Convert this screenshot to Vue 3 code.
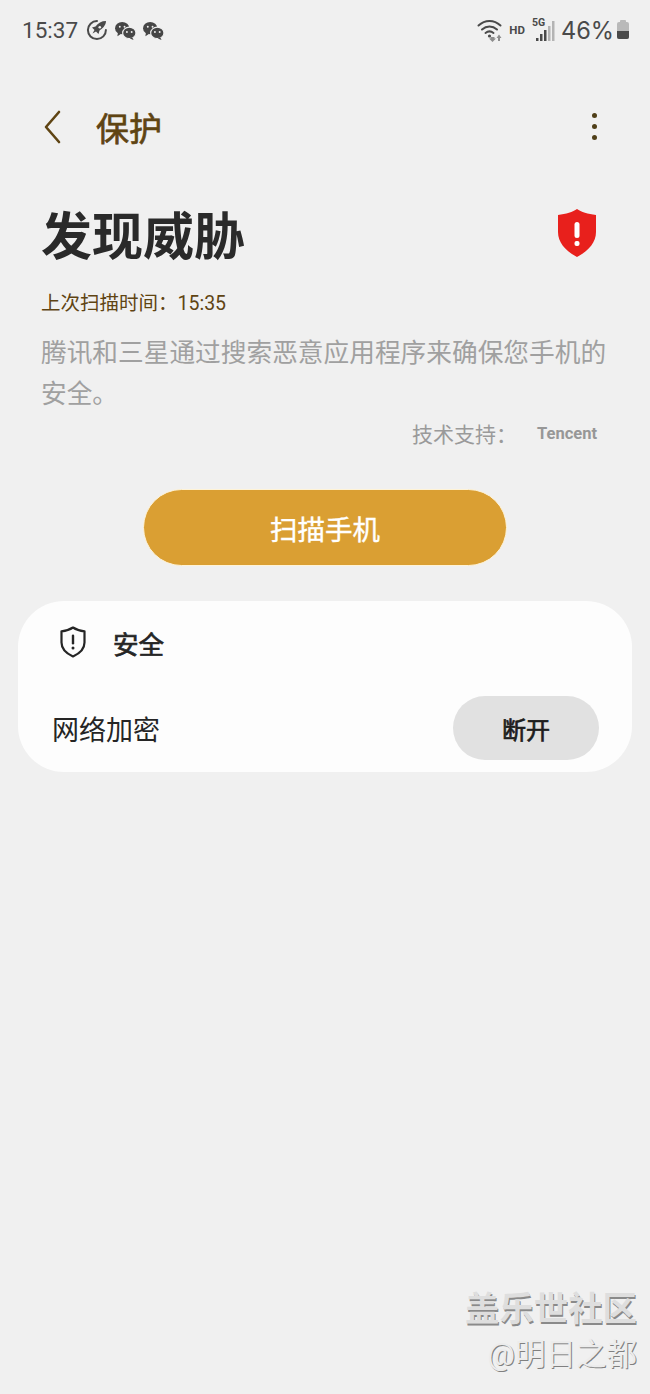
<script setup>
const chats = [1, 2]
</script>

<template>
  <div class="page">
    <div class="status">
      <span class="time">15:37</span>
      <svg class="ico-rocket" width="22" height="22" viewBox="0 0 22 22">
        <path d="M11 2.100A9 9 0 1 0 19.900 11" fill="none" stroke="#4a4a4a" stroke-width="2" stroke-linecap="round" />
        <path d="M20 2c-4.500 0-8 2-10.500 5.500L6 8.500 8.500 11l-2 3.500 3.500-2 2.500 2.500 1-3.500C16 10 20 6.500 20 2z" fill="#4a4a4a" />
        <circle cx="13.800" cy="8.200" r="1.300" fill="#f0f0f0" />
      </svg>
      <svg v-for="n in chats" :key="n" class="ico-chat" width="23" height="19" viewBox="0 0 24 20">
        <ellipse cx="8.500" cy="7.500" rx="7.500" ry="6.500" fill="#464646" />
        <path d="M4 12l-.5 4 4-2.500z" fill="#464646" />
        <ellipse cx="16" cy="12.500" rx="7" ry="6" fill="#464646" stroke="#f0f0f0" stroke-width="1.200" />
        <path d="M19 17l1.500 3-4-1.500z" fill="#464646" />
        <circle cx="6" cy="6" r="1" fill="#f0f0f0" />
        <circle cx="11" cy="6" r="1" fill="#f0f0f0" />
        <circle cx="13.500" cy="11.500" r="1" fill="#f0f0f0" />
        <circle cx="18.500" cy="11.500" r="1" fill="#f0f0f0" />
      </svg>
      <div class="status-right">
        <svg width="28" height="24" viewBox="0 0 28 24">
          <path d="M1.500 7.500C8 1.500 17 1.500 23.500 7.500M5 11.500c4.500-4 10.500-4 15 0M8.500 15c2.500-2 5.500-2 8 0" fill="none" stroke="#4a4a4a" stroke-width="2" stroke-linecap="round" />
          <circle cx="12.500" cy="18" r="1.600" fill="#4a4a4a" />
          <path d="M13.500 19h4v1.500h1.500l-3.500 3.500-3.500-3.500h1.500zM21 23v-3h-1.500l2.500-3.500 2.500 3.500H23v3z" fill="#8d8d8d" />
        </svg>
        <span class="hd">HD</span>
        <div class="signal">
          <span class="fiveg">5G</span>
          <svg width="24" height="24" viewBox="0 0 24 24">
            <rect x="3" y="20" width="2.500" height="3" fill="#4a4a4a" />
            <rect x="7" y="16" width="2.500" height="7" fill="#4a4a4a" />
            <rect x="11" y="12" width="2.500" height="11" fill="#4a4a4a" />
            <rect x="15" y="8" width="2.500" height="15" fill="#b4b4b4" />
            <rect x="19" y="3" width="2.500" height="20" fill="#b4b4b4" />
          </svg>
        </div>
        <span class="batt-text">46%</span>
        <svg width="14" height="20" viewBox="0 0 14 20">
          <rect x="4" y="0" width="6" height="3" rx="1" fill="#b9b9b9" />
          <rect x="1" y="2" width="12" height="17" rx="2" fill="#b9b9b9" />
          <path d="M1 11h12v6a2 2 0 0 1-2 2H3a2 2 0 0 1-2-2z" fill="#4a4a4a" />
        </svg>
      </div>
    </div>

    <header class="top">
      <svg class="back" width="20" height="34" viewBox="0 0 20 34">
        <path d="M16 2L3 17l13 15" fill="none" stroke="#5f4413" stroke-width="2.600" stroke-linecap="round" stroke-linejoin="round" />
      </svg>
      <h1 class="title">保护</h1>
      <div class="more"><i></i><i></i><i></i></div>
    </header>

    <section class="intro">
      <div class="headline">
        <h2>发现威胁</h2>
        <svg width="40" height="48" viewBox="0 0 40 48">
          <path d="M20 0c4 3 11 5 19 6v17c0 11-8 19-19 25C9 42 1 34 1 23V6c8-1 15-3 19-6z" fill="#e8201c" />
          <rect x="17.500" y="13" width="5" height="16" rx="2.500" fill="#fff" />
          <rect x="17.500" y="32" width="5" height="5" rx="2" fill="#fff" />
        </svg>
      </div>
      <p class="last">上次扫描时间：15:35</p>
      <p class="desc">腾讯和三星通过搜索恶意应用程序来确保您手机的安全。</p>
      <div class="support">
        <span class="support-label">技术支持：</span>
        <span class="tencent">Tencent</span>
      </div>
    </section>

    <div class="scan-wrap">
      <button type="button" class="scan">扫描手机</button>
    </div>

    <section class="card">
      <div class="card-head">
        <svg width="28" height="32" viewBox="0 0 28 32">
          <path d="M14 1.500c3 2 6.500 3.200 11.500 3.800v11.200c0 6-4.500 10.800-11.500 14C7 27.300 2.500 22.500 2.500 16.500V5.300C7.500 4.700 11 3.500 14 1.500z" fill="none" stroke="#252525" stroke-width="2.200" stroke-linejoin="round" />
          <rect x="12.800" y="8.500" width="2.400" height="10" rx="1.200" fill="#252525" />
          <circle cx="14" cy="22" r="1.500" fill="#252525" />
        </svg>
        <span>安全</span>
      </div>
      <div class="card-row">
        <span class="row-label">网络加密</span>
        <button type="button" class="disconnect">断开</button>
      </div>
    </section>

    <div class="watermark">
      <div class="wm-site">盖乐世社区</div>
      <div class="wm-user">@明日之都</div>
    </div>
  </div>
</template>

<style>
body {
  background: #f0f0f0;
}
</style>

<style scoped>
.page {
  position: relative;
  width: 650px;
  height: 1394px;
  overflow: hidden;
  background: #f0f0f0;
  font-family: "Roboto", "Noto Sans CJK SC", sans-serif;
  color: #252525;
}
h1, h2, p {
  margin: 0;
  font-weight: inherit;
}
button {
  border: none;
  padding: 0;
  font-family: inherit;
}

.status {
  display: flex;
  align-items: center;
  height: 60px;
  padding: 0 20px 0 22px;
  color: #4a4a4a;
}
.time {
  font-size: 22.500px;
  margin-right: 8px;
}
.ico-rocket {
  margin-right: 6px;
}
.ico-chat {
  margin-right: 5px;
}
.status-right {
  display: flex;
  align-items: center;
  margin-left: auto;
}
.hd {
  font-size: 11.500px;
  font-weight: 700;
  margin: 0 8px 0 4px;
}
.signal {
  position: relative;
  width: 24px;
  height: 24px;
  margin-right: 4px;
}
.fiveg {
  position: absolute;
  top: -1px;
  left: -1px;
  font-size: 10.500px;
  font-weight: 700;
  line-height: 12px;
}
.batt-text {
  font-family: "Inter", sans-serif;
  font-size: 23.600px;
  margin-right: 2px;
}

.top {
  display: flex;
  align-items: center;
  height: 70px;
  margin-top: 32px;
  padding: 0 53px 0 43px;
}
.back {
  margin-right: 33px;
}
.title {
  font-size: 33px;
  font-weight: 400;
  -webkit-text-stroke: 0.700px #5f4413;
  color: #5f4413;
}
.more {
  display: flex;
  flex-direction: column;
  gap: 6px;
  margin-left: auto;
  margin-top: -2px;
}
.more i {
  display: block;
  width: 5px;
  height: 5px;
  border-radius: 50%;
  background: #4f3f18;
}

.intro {
  padding: 0 41px;
}
.headline {
  display: flex;
  align-items: center;
  justify-content: space-between;
  height: 72px;
  margin-top: 35px;
  padding-right: 12px;
}
.headline h2 {
  font-size: 51px;
  font-weight: 700;
  color: #2a2a2a;
}
.last {
  margin-top: 21px;
  font-size: 19.500px;
  line-height: 28px;
  color: #5f4413;
}
.desc {
  margin-top: 15px;
  font-size: 25.700px;
  line-height: 40.500px;
  color: #a0a0a0;
}
.support {
  display: flex;
  align-items: center;
  justify-content: flex-end;
  height: 30px;
  margin-top: 4px;
  padding-right: 12px;
  color: #9a9a9a;
}
.support-label {
  font-size: 21px;
  margin-right: 20px;
}
.tencent {
  font-size: 16.500px;
  font-weight: 700;
  color: #979797;
}

.scan-wrap {
  display: flex;
  justify-content: center;
  margin-top: 41px;
}
.scan {
  width: 364px;
  height: 77px;
  border: 1px solid #fff3d6;
  border-radius: 39px;
  background: #da9f33;
  color: #fff;
  font-size: 27.500px;
  -webkit-text-stroke: 0.400px #fff;
}

.card {
  margin: 35px 18px 0 18px;
  height: 171px;
  padding: 0 33px 12px 34px;
  border-radius: 46px;
  background: #fdfdfd;
  box-sizing: border-box;
}
.card-head {
  display: flex;
  align-items: center;
  gap: 26px;
  height: 82px;
  margin-bottom: 13px;
  padding-left: 7px;
  font-size: 25.500px;
  -webkit-text-stroke: 0.700px #252525;
  color: #252525;
}
.card-row {
  display: flex;
  align-items: center;
  justify-content: space-between;
}
.row-label {
  font-size: 27px;
  color: #252525;
}
.disconnect {
  width: 146px;
  height: 64px;
  border-radius: 32px;
  background: #e1e1e1;
  color: #1d1d1d;
  font-size: 24px;
  -webkit-text-stroke: 0.700px #1d1d1d;
}

.watermark {
  position: absolute;
  right: 13px;
  bottom: 21px;
  text-align: right;
}
.wm-site {
  font-size: 34.400px;
  line-height: 40px;
  font-weight: 700;
  color: #dedede;
  text-shadow: 1px 2px 0 #8a8a8a;
}
.wm-user {
  margin-top: 8px;
  font-size: 30.500px;
  line-height: 36px;
  color: #ececec;
  text-shadow: 1px 1px 0 #808080;
}
</style>
